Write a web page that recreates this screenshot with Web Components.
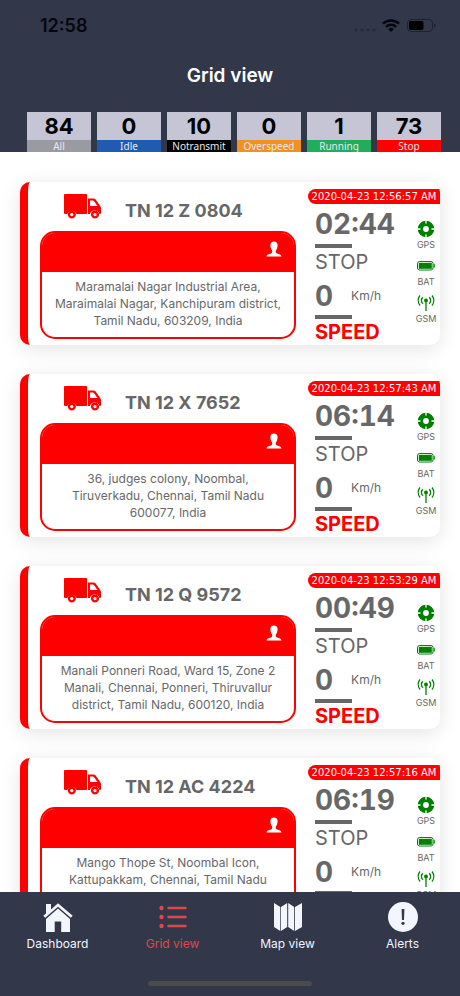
<!DOCTYPE html>
<html lang="en">
<head>
<meta charset="utf-8">
<meta name="viewport" content="width=device-width, initial-scale=1">
<title>Grid view</title>
<style>
  :root {
    --bar: #32374a;
    --red: #ff0000;
    --grey: #676767;
    --ice: #f3f5ff;
  }
  html, body { height: 100%; }
  body { margin: 0; background: #fff; font-family: Inter, "Liberation Sans", sans-serif; }
</style>
</head>
<body>
<tracker-app></tracker-app>

<template id="t-app">
  <style>
    :host { display: flex; flex-direction: column; height: 100vh; }
    header { background: var(--bar); flex: none; }
    h1 { margin: 0; padding: 24px 0 22px; text-align: center; color: #fff; font-size: 19px; line-height: 28px; font-weight: 600; }
    .tiles { display: grid; grid-template-columns: repeat(6, 1fr); gap: 6px; padding: 0 19px 0 27px; }
    main { flex: 1; min-height: 0; overflow-y: auto; scrollbar-width: none; padding: 30px 20px; box-sizing: border-box; display: flex; flex-direction: column; gap: 29px; }
  </style>
  <header>
    <status-bar></status-bar>
    <h1>Grid view</h1>
    <div class="tiles">
      <count-tile count="84" label="All" style="--tone:#9a9aa3"></count-tile>
      <count-tile count="0" label="Idle" style="--tone:#1f5bb0"></count-tile>
      <count-tile count="10" label="Notransmit" style="--tone:#000"></count-tile>
      <count-tile count="0" label="Overspeed" style="--tone:#f1911f"></count-tile>
      <count-tile count="1" label="Running" style="--tone:#1fae5b"></count-tile>
      <count-tile count="73" label="Stop" style="--tone:#ff0000"></count-tile>
    </div>
  </header>
  <main>
    <vehicle-card plate="TN 12 Z 0804" stamp="2020-04-23 12:56:57 AM" time="02:44">Maramalai Nagar Industrial Area,<br>Maraimalai Nagar, Kanchipuram district,<br>Tamil Nadu, 603209, India</vehicle-card>
    <vehicle-card plate="TN 12 X 7652" stamp="2020-04-23 12:57:43 AM" time="06:14">36, judges colony, Noombal,<br>Tiruverkadu, Chennai, Tamil Nadu<br>600077, India</vehicle-card>
    <vehicle-card plate="TN 12 Q 9572" stamp="2020-04-23 12:53:29 AM" time="00:49">Manali Ponneri Road, Ward 15, Zone 2<br>Manali, Chennai, Ponneri, Thiruvallur<br>district, Tamil Nadu, 600120, India</vehicle-card>
    <vehicle-card plate="TN 12 AC 4224" stamp="2020-04-23 12:57:16 AM" time="06:19">Mango Thope St, Noombal Icon,<br>Kattupakkam, Chennai, Tamil Nadu</vehicle-card>
  </main>
  <tab-bar></tab-bar>
</template>

<template id="t-status">
  <style>
    :host { display: flex; align-items: center; justify-content: space-between; padding: 14px 24px 0 40px; color: #05060f; }
    span { font-size: 18px; line-height: 24px; font-weight: 600; }
    svg { display: block; }
  </style>
  <span>12:58</span>
  <svg width="82" height="16" viewBox="0 0 82 16" aria-hidden="true">
    <g fill="#262a3c"><circle cx="2" cy="12" r="1.6"/><circle cx="8" cy="12" r="1.6"/><circle cx="14" cy="12" r="1.6"/><circle cx="20" cy="12" r="1.6"/></g>
    <g fill="none" stroke="#05060f" stroke-width="2.5"><path d="M29 5.6a11.6 11.6 0 0 1 16 0"/><path d="M32 8.8a7.2 7.2 0 0 1 10 0"/></g>
    <path fill="#05060f" d="M37 14l-2.7-2.8a3.8 3.8 0 0 1 5.4 0z"/>
    <rect x="53.5" y="1.5" width="25" height="12" rx="3.5" fill="none" stroke="#1d2130"/>
    <rect x="55" y="3" width="14.500" height="9" rx="1.800" fill="#000"/>
    <path fill="#1d2130" d="M80 5.400q1.800.6 1.800 2.100T80 9.600z"/>
  </svg>
</template>

<template id="t-tile">
  <style>
    :host { display: block; min-width: 0; }
    button { display: block; width: 100%; border: 0; padding: 0; margin: 0; background: #c5c5d6; font: inherit; color: #000; overflow: hidden; cursor: pointer; }
    b { display: block; font-size: 22px; line-height: 28px; font-weight: 700; }
    span { display: block; background: var(--tone); color: #e8e8ee; font: 10px/12px "Noto Sans", sans-serif; }
  </style>
  <button type="button"><b></b><span></span></button>
</template>

<template id="t-card">
  <style>
    :host { display: flex; flex: none; box-sizing: border-box; height: 163px; border-left: 8px solid var(--red); border-radius: 10px; background: #fff; box-shadow: 0 4px 20px rgba(0,0,0,.11); color: var(--grey); overflow: hidden; }
    .info { flex: 1; min-width: 0; padding: 0 12px; }
    .head { display: flex; align-items: center; height: 49px; padding-left: 24px; gap: 24px; }
    h2 { margin: 0; padding-top: 8px; font-size: 18px; line-height: 24px; font-weight: 700; }
    .box { box-sizing: border-box; height: 108px; border: 2px solid var(--red); border-radius: 15px; overflow: hidden; text-align: center; }
    .owner { background: var(--red); height: 39px; display: flex; justify-content: flex-end; align-items: center; padding-right: 12px; box-sizing: border-box; padding-bottom: 8px; }
    p { margin: 0; padding-top: 6px; font-size: 12px; line-height: 17px; white-space: nowrap; }
    .side { flex: none; width: 132px; padding-top: 7px; }
    time.stamp { display: block; height: 15px; border-radius: 8px 0 0 8px; background: var(--red); color: #fff; font: 10px/16px "DejaVu Sans", sans-serif; text-align: center; white-space: nowrap; }
    .cols { display: flex; justify-content: space-between; padding-left: 7px; }
    .nums { display: flex; flex-direction: column; align-items: flex-start; }
    .big { font-size: 28px; line-height: 40px; font-weight: 700; font-variant-numeric: tabular-nums; }
    hr { border: 0; margin: 0; width: 37px; height: 4px; background: var(--grey); }
    .state { font-size: 20px; line-height: 28px; }
    .speed { display: flex; align-items: center; gap: 18px; height: 39px; font-size: 12px; }
    .label { font-size: 20px; line-height: 26px; font-weight: 700; color: var(--red); }
    .sig { display: flex; flex-direction: column; width: 28px; padding-top: 15px; }
    .sig div { display: flex; flex-direction: column; align-items: center; height: 37px; font-size: 9px; line-height: 12px; }
    svg { display: block; }
  </style>
  <div class="info">
    <div class="head">
      <svg width="37" height="25" viewBox="0 0 37 25" fill="#f00" aria-hidden="true">
        <path fill-rule="evenodd" d="M1 0h21q1 0 1 1v19H12.500a5 5 0 0 0-9.200 0H1q-1 0-1-1V1q0-1 1-1zM24 4.500h5.500q1.500 0 2.300 1.200l4.400 6.300q.8 1.200.8 2.600V19q0 1-1 1h-.500a5 5 0 0 0-9.600 0H24zM26 6.500V12h7.500l-3.400-4.800q-.5-.7-1.400-.7z"/>
        <path fill-rule="evenodd" d="M7.800 16.500a4 4 0 1 0 .01 0zM7.800 19a1.600 1.600 0 1 1-.01 0zM31 16.500a4 4 0 1 0 .01 0zM31 19a1.600 1.600 0 1 1-.01 0z"/>
      </svg>
      <h2></h2>
    </div>
    <div class="box">
      <div class="owner">
        <svg width="16" height="16" viewBox="0 0 16 16" fill="#fff" aria-hidden="true"><path d="M8 .5C5.600.5 4.300 2 4.400 4.500c.1 2.200.7 3.800 1.700 4.900.3 1.300.1 2.300-.6 2.800C4 13 1 12.900.5 15.500h15c-.5-2.600-3.500-2.500-5-3.300-.7-.5-.9-1.500-.6-2.800 1-1.100 1.600-2.700 1.700-4.900C11.700 2 10.400.5 8 .5z"/></svg>
      </div>
      <p><slot></slot></p>
    </div>
  </div>
  <div class="side">
    <time class="stamp"></time>
    <div class="cols">
      <div class="nums">
        <div class="big elapsed"></div>
        <hr>
        <div class="state">STOP</div>
        <div class="speed"><span class="big">0</span><span>Km/h</span></div>
        <hr>
        <div class="label">SPEED</div>
      </div>
      <div class="sig">
        <div><svg width="18" height="20" viewBox="0 0 18 20" aria-hidden="true"><circle cx="9" cy="10" r="5.600" fill="none" stroke="#008000" stroke-width="5.400"/><path stroke="#fff" stroke-width="1.300" d="M9 1v3.500M9 15.500V19M0 10h3.500M14.500 10H18"/></svg>GPS</div>
        <div><svg width="18" height="20" viewBox="0 0 18 20" aria-hidden="true"><rect x=".5" y="5.500" width="15.500" height="8.500" rx="2" fill="none" stroke="#008000"/><rect x="1.800" y="6.800" width="13" height="6" fill="#008000"/><path fill="#008000" d="M16.700 7.500q1.300.5 1.300 2.200t-1.300 2.200z"/></svg>BAT</div>
        <div><svg width="18" height="20" viewBox="0 0 18 20" fill="none" stroke="#008000" stroke-width="1.300" aria-hidden="true"><circle cx="9" cy="7.500" r="1.900" fill="#008000" stroke="none"/><path d="M9 8v10M5.800 4.300a4.800 4.800 0 0 0 0 6.400M12.200 4.300a4.800 4.800 0 0 1 0 6.400M3 2.500a8 8 0 0 0 0 10M15 2.500a8 8 0 0 1 0 10"/></svg>GSM</div>
      </div>
    </div>
  </div>
</template>

<template id="t-tabs">
  <style>
    :host { display: flex; flex-direction: column; flex: none; background: var(--bar); }
    nav { display: grid; grid-template-columns: repeat(4, 1fr); padding: 9px 0 27px; }
    a { display: flex; flex-direction: column; align-items: center; gap: 1px; color: var(--ice); text-decoration: none; font-size: 12px; line-height: 20px; }
    a[aria-current] { color: #e04848; }
    svg { display: block; }
    .home { align-self: center; width: 164px; height: 5px; border-radius: 3px; background: #494b4c; margin-bottom: 10px; }
  </style>
  <nav>
    <a href="#dashboard"><svg width="32" height="32" viewBox="0 0 32 32" fill="currentColor" aria-hidden="true"><path d="M4 3h5v5.500l7-6.200 14.700 12.500-1.900 2L16 5.800 3.200 16.800l-1.900-2L4 12.500z"/><path d="M16 7.600l12 10.300V31h-8.800V20.500h-6.500V31H4V17.900z"/></svg>Dashboard</a>
    <a href="#grid" aria-current="page"><svg width="32" height="32" viewBox="0 0 32 32" fill="currentColor" aria-hidden="true"><circle cx="4.500" cy="7" r="2.200"/><circle cx="4.500" cy="16" r="2.200"/><circle cx="4.500" cy="25" r="2.200"/><path stroke="currentColor" stroke-width="2.400" stroke-linecap="round" d="M11.500 7h17M11.500 16h17M11.500 25h17"/></svg>Grid view</a>
    <a href="#map"><svg width="32" height="32" viewBox="0 0 32 32" fill="currentColor" aria-hidden="true"><path d="M2 2l6.300 4v24L2 26zM9 6l6.200-4v24L9 30zM16.200 2l6 4v24l-6-4zM23 6l7-4v24l-7 4z"/></svg>Map view</a>
    <a href="#alerts"><svg width="32" height="32" viewBox="0 0 32 32" aria-hidden="true"><circle cx="16" cy="16" r="15" fill="currentColor"/><path fill="#32374a" d="M14.600 8h2.800l-.4 11h-2z"/><circle cx="16" cy="22.300" r="1.600" fill="#32374a"/></svg>Alerts</a>
  </nav>
  <div class="home"></div>
</template>

<script>
  class Base extends HTMLElement {
    constructor(id) {
      super();
      this.attachShadow({ mode: "open" }).append(document.getElementById(id).content.cloneNode(true));
    }
    put(sel, attr) { this.shadowRoot.querySelector(sel).textContent = this.getAttribute(attr); }
  }
  customElements.define("status-bar", class extends Base { constructor() { super("t-status"); } });
  customElements.define("tab-bar", class extends Base { constructor() { super("t-tabs"); } });
  customElements.define("count-tile", class extends Base {
    constructor() { super("t-tile"); }
    connectedCallback() { this.put("b", "count"); this.put("span", "label"); }
  });
  customElements.define("vehicle-card", class extends Base {
    constructor() { super("t-card"); }
    connectedCallback() { this.put("h2", "plate"); this.put(".stamp", "stamp"); this.put(".elapsed", "time"); }
  });
  customElements.define("tracker-app", class extends Base { constructor() { super("t-app"); } });
</script>
</body>
</html>
